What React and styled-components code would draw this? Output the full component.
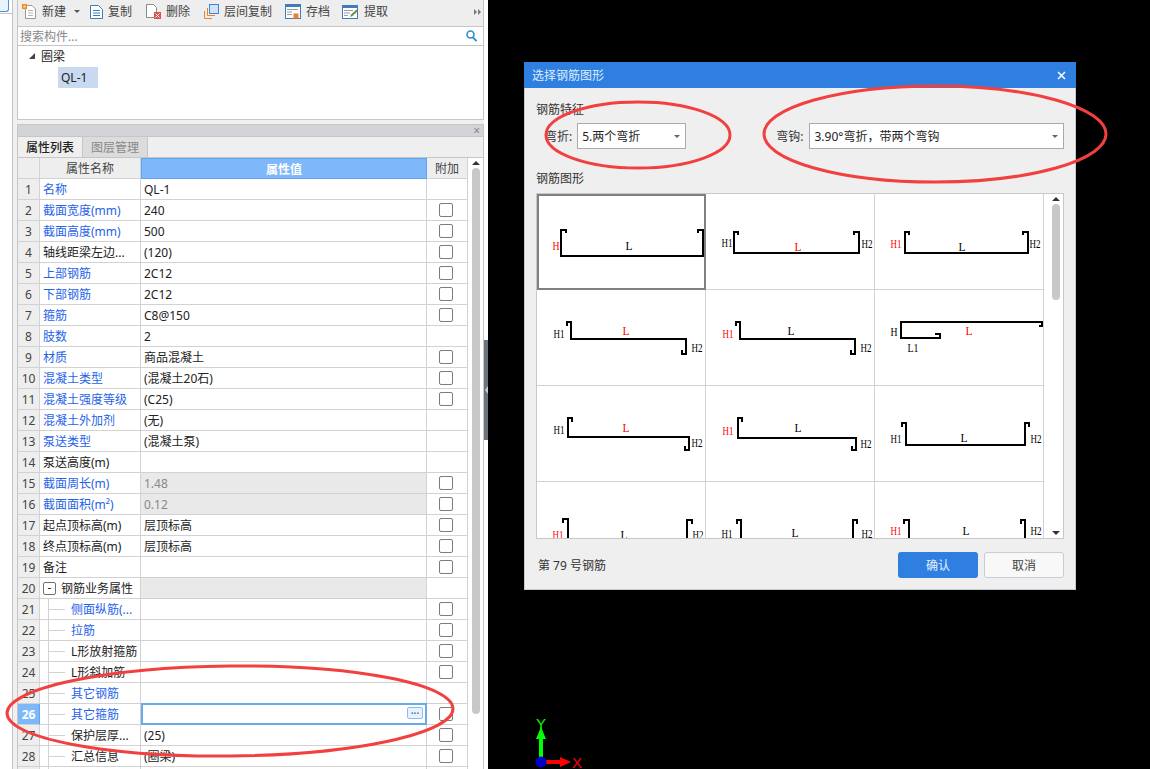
import styled, { createGlobalStyle } from "styled-components";

const GlobalStyle = createGlobalStyle`
  html, body {
    margin: 0;
    padding: 0;
    background: #000;
    overflow: hidden;
  }
  * {
    box-sizing: border-box;
  }
`;

const rows = [
  { name: "名称", value: "QL-1", link: true },
  { name: "截面宽度(mm)", value: "240", link: true, check: true },
  { name: "截面高度(mm)", value: "500", link: true, check: true },
  { name: "轴线距梁左边...", value: "(120)", check: true },
  { name: "上部钢筋", value: "2C12", link: true, check: true },
  { name: "下部钢筋", value: "2C12", link: true, check: true },
  { name: "箍筋", value: "C8@150", link: true, check: true },
  { name: "肢数", value: "2", link: true },
  { name: "材质", value: "商品混凝土", link: true, check: true },
  { name: "混凝土类型", value: "(混凝土20石)", link: true, check: true },
  { name: "混凝土强度等级", value: "(C25)", link: true, check: true },
  { name: "混凝土外加剂", value: "(无)", link: true },
  { name: "泵送类型", value: "(混凝土泵)", link: true },
  { name: "泵送高度(m)", value: "" },
  { name: "截面周长(m)", value: "1.48", link: true, check: true, locked: true },
  { name: "截面面积(m²)", value: "0.12", link: true, check: true, locked: true },
  { name: "起点顶标高(m)", value: "层顶标高", check: true },
  { name: "终点顶标高(m)", value: "层顶标高", check: true },
  { name: "备注", value: "", check: true },
  { name: "钢筋业务属性", value: "", group: true },
  { name: "侧面纵筋(...", value: "", link: true, check: true, child: true },
  { name: "拉筋", value: "", link: true, check: true, child: true },
  { name: "L形放射箍筋", value: "", check: true, child: true },
  { name: "L形斜加筋", value: "", check: true, child: true },
  { name: "其它钢筋", value: "", link: true, child: true },
  { name: "其它箍筋", value: "", link: true, check: true, child: true, active: true },
  { name: "保护层厚...", value: "(25)", check: true, child: true },
  { name: "汇总信息", value: "(圈梁)", check: true, child: true },
  { name: "", value: "", child: true, blank: true },
];

// 每个格子里的钢筋形状，坐标相对格子左上角
const shapes = [
  { d: "M29 39V36H24V62H166V36H161V39", labels: [["H", 19, 52, true], ["L", 92, 52]] },
  { d: "M32 41V38H28V59H153V38H148V41", labels: [["H1", 21, 49], ["L", 92, 53, true], ["H2", 161, 50]] },
  { d: "M34 41V38H30V59H153V38H148V41", labels: [["H1", 21, 50, true], ["L", 87, 53], ["H2", 160, 50]] },
  { d: "M30 36V32H34V49H149V64H145V60", labels: [["H1", 22, 44], ["L", 89, 41, true], ["H2", 160, 58]] },
  { d: "M30 36V32H34V49H149V64H145V60", labels: [["H1", 22, 44, true], ["L", 85, 41], ["H2", 160, 58]] },
  { d: "M60 44H65V48H26V32H167V36H164", labels: [["H", 19, 42], ["L", 94, 41, true], ["L1", 38, 58]] },
  { d: "M35 36V32H31V51H152V64H148V60", labels: [["H1", 22, 44], ["L", 89, 42, true], ["H2", 160, 57]] },
  { d: "M36 36V32H32V52H150V64H146V60", labels: [["H1", 22, 45, true], ["L", 92, 42], ["H2", 160, 58]] },
  { d: "M27 41V37H31V59H150V37H154V41", labels: [["H1", 21, 53], ["L", 89, 52], ["H2", 161, 53]] },
  { d: "M26 41V37H31V80H150V38H155V42", labels: [["H1", 21, 53, true], ["L", 87, 53], ["H2", 161, 53]] },
  { d: "M31 42V38H35V80H147V38H151V42", labels: [["H1", 21, 52], ["L", 89, 51], ["H2", 161, 52]] },
  { d: "M29 42V38H34V80H150V38H146V42", labels: [["H1", 21, 49, true], ["L", 91, 49], ["H2", 161, 49]] },
];

function NewIcon() {
  return (
    <svg width="15" height="15" viewBox="0 0 15 15">
      <path d="M3.5 1.5H10L13.5 5V14.5H3.5Z" fill="#fff" stroke="#9a9a9a" />
      <path d="M6 6.5H11M6 9H11M6 11.5H11" stroke="#b5b5b5" />
      <rect x="0" y="0" width="5" height="5" fill="#f08a24" />
      <rect x="1.5" y="1.5" width="2" height="2" fill="#ffe2a8" />
    </svg>
  );
}

function CopyIcon() {
  return (
    <svg width="13" height="14" viewBox="0 0 13 14">
      <path d="M.5 .5H8.5L12.5 4.5V13.5H.5Z" fill="#fff" stroke="#3f7cb8" />
      <path d="M3 5.5H10M3 8H10M3 10.5H10" stroke="#3f7cb8" />
    </svg>
  );
}

function DeleteIcon() {
  return (
    <svg width="15" height="15" viewBox="0 0 15 15">
      <path d="M.5 .5H7.5L10.5 3.5V13.5H.5Z" fill="#fff" stroke="#8a8a8a" />
      <rect x="8" y="8" width="7" height="7" fill="#d9534f" />
      <path d="M9.5 9.5L13.5 13.5M13.5 9.5L9.5 13.5" stroke="#fff" />
    </svg>
  );
}

function FloorCopyIcon() {
  return (
    <svg width="15" height="15" viewBox="0 0 15 15">
      <path d="M3.5 4V11.5H11M.5 7V14.5H8" fill="none" stroke="#ee7f2d" />
      <rect x="5.5" y=".5" width="9" height="9" fill="#cfe2f7" stroke="#3f86cc" />
    </svg>
  );
}

function SaveIcon() {
  return (
    <svg width="16" height="15" viewBox="0 0 16 15">
      <rect x=".5" y=".5" width="15" height="14" fill="#fff" stroke="#3f7cb8" />
      <rect x="0" y="0" width="16" height="3" fill="#3f7cb8" />
      <path d="M2 5.5H13M2 8H7M2 10.5H7" stroke="#9a9a9a" />
      <rect x="8.5" y="9.5" width="5" height="5" fill="#ee7f2d" />
    </svg>
  );
}

function ExtractIcon() {
  return (
    <svg width="17" height="14" viewBox="0 0 17 14">
      <rect x=".5" y=".5" width="15" height="13" fill="#fff" stroke="#3f7cb8" />
      <rect x="0" y="0" width="16" height="3" fill="#3f7cb8" />
      <path d="M2 5.5H11M2 8H8M2 10.5H6" stroke="#9a9a9a" />
      <path d="M8 12L9 9.5L14.5 4.5L16 6L10.5 11Z" fill="#6f8f4f" />
    </svg>
  );
}

function SearchIcon() {
  return (
    <svg width="11" height="12" viewBox="0 0 11 12">
      <circle cx="4.5" cy="4.5" r="3.5" fill="none" stroke="#2f8fc9" strokeWidth="1.6" />
      <path d="M7 7.5L10.5 11" stroke="#2f8fc9" strokeWidth="1.8" />
    </svg>
  );
}

function Rebar({ shape }) {
  return (
    <RebarDrawing viewBox="0 0 169 96">
      <path d={shape.d} fill="none" stroke="#000" strokeWidth="2" />
      {shape.labels.map(([text, x, y, red]) => (
        <RebarLabel
          key={text}
          x={x}
          y={y + 4}
          textAnchor="middle"
          textLength={text.length > 1 ? 11 : 7}
          lengthAdjust="spacingAndGlyphs"
          fill={red ? "#f00" : "#000"}
        >
          {text}
        </RebarLabel>
      ))}
    </RebarDrawing>
  );
}

function PropertyRow({ row, index }) {
  return (
    <Row>
      <NumberCell $active={row.active}>{!row.blank && index + 1}</NumberCell>
      <NameCell $link={row.link} $child={row.child} $group={row.group}>
        {row.group && <Toggle>-</Toggle>}
        {row.child && <TreeLine />}
        {row.name}
      </NameCell>
      <ValueCell $locked={row.locked} $group={row.group} $active={row.active}>
        {row.value}
        {row.active && <MoreButton>···</MoreButton>}
      </ValueCell>
      <ExtraCell>{row.check && <Checkbox />}</ExtraCell>
    </Row>
  );
}

export default function App() {
  return (
    <Page>
      <GlobalStyle />
      <Sidebar>
        <Rail>
          <RailButton />
        </Rail>
        <Main>
          <Toolbar>
            <ToolButton><NewIcon />新建<Caret /></ToolButton>
            <ToolButton $gap={10}><CopyIcon />复制</ToolButton>
            <ToolButton $gap={14}><DeleteIcon />删除</ToolButton>
            <ToolButton $gap={14}><FloorCopyIcon />层间复制</ToolButton>
            <ToolButton $gap={13}><SaveIcon />存档</ToolButton>
            <ToolButton $gap={12}><ExtractIcon />提取</ToolButton>
            <MoreArrows />
          </Toolbar>
          <SearchBar>
            搜索构件...
            <SearchIcon />
          </SearchBar>
          <Tree>
            <TreeRoot><TreeArrow />圈梁</TreeRoot>
            <TreeLeaf>QL-1</TreeLeaf>
          </Tree>
          <PanelBar>×</PanelBar>
          <Tabs>
            <Tab $active>属性列表</Tab>
            <Tab>图层管理</Tab>
          </Tabs>
          <TableWrap>
            <Table>
              <HeadRow>
                <HeadCell />
                <HeadCell>属性名称</HeadCell>
                <HeadCell $active>属性值</HeadCell>
                <HeadCell>附加</HeadCell>
              </HeadRow>
              {rows.map((row, i) => (
                <PropertyRow key={i} row={row} index={i} />
              ))}
            </Table>
            <Scrollbar>
              <ArrowUp />
              <Thumb $height={546} />
            </Scrollbar>
          </TableWrap>
        </Main>
        <Splitter>
          <SplitterHandle />
        </Splitter>
      </Sidebar>

      <Canvas>
        <Dialog>
          <TitleBar>
            选择钢筋图形
            <CloseIcon viewBox="0 0 9 9">
              <path d="M1 1L8 8M8 1L1 8" stroke="#fff" strokeWidth="1.5" />
            </CloseIcon>
          </TitleBar>
          <DialogBody>
            <SectionLabel>钢筋特征</SectionLabel>
            <ComboRow>
              <ComboLabel>弯折:</ComboLabel>
              <Combo $width={109}>5.两个弯折<ComboCaret /></Combo>
              <ComboLabel $offset={90} $after={6}>弯钩:</ComboLabel>
              <Combo>3.90°弯折，带两个弯钩<ComboCaret /></Combo>
            </ComboRow>
            <SectionLabel $top={20}>钢筋图形</SectionLabel>
            <GridFrame>
              <ShapeGrid>
                {shapes.map((shape, i) => (
                  <ShapeCell key={i} $selected={i === 0}>
                    <Rebar shape={shape} />
                  </ShapeCell>
                ))}
              </ShapeGrid>
              <GridScroll>
                <ArrowUp />
                <Thumb $height={96} />
                <ArrowDown />
              </GridScroll>
            </GridFrame>
            <Footer>
              <FooterText>第 79 号钢筋</FooterText>
              <FooterButtons>
                <PrimaryButton>确认</PrimaryButton>
                <CancelButton>取消</CancelButton>
              </FooterButtons>
            </Footer>
          </DialogBody>
        </Dialog>

        <Axis viewBox="0 0 70 59">
          <path d="M21 50V24" stroke="#00ff00" strokeWidth="4" />
          <path d="M21 17L26 29H16Z" fill="#00ff00" />
          <path d="M26 52H42" stroke="#ff0000" strokeWidth="4" />
          <path d="M51 52L40 47V57Z" fill="#ff0000" />
          <circle cx="21" cy="52" r="5.5" fill="#0000c8" />
          <AxisLabel x="21" y="19" fill="#00ff00">Y</AxisLabel>
          <AxisLabel x="57" y="58" fill="#ff0000">X</AxisLabel>
        </Axis>
      </Canvas>

      <Marks viewBox="0 0 1150 769">
        <ellipse cx="230" cy="711" rx="223" ry="45" transform="rotate(-.6 230 711)" />
        <ellipse cx="638" cy="135" rx="92" ry="33" />
        <ellipse cx="935" cy="134" rx="171" ry="48" />
      </Marks>
    </Page>
  );
}

const uiFont = `"Noto Sans", "Noto Sans CJK SC", sans-serif`;

const Page = styled.div`
  position: relative;
  display: flex;
  width: 1150px;
  height: 769px;
  overflow: hidden;
  background: #000;
  font-family: ${uiFont};
  font-size: 12px;
  color: #222;
`;

const Sidebar = styled.div`
  display: flex;
  width: 488px;
  height: 100%;
  flex-shrink: 0;
  background: #f0f0f0;
`;

const Rail = styled.div`
  width: 13px;
  height: 100%;
  margin-right: 4px;
  background: #fff;
  border-right: 1px solid #c4c4c4;
`;

const RailButton = styled.div`
  width: 12px;
  height: 14px;
  border-bottom: 1px solid #c4c4c4;

  &::before {
    content: "";
    display: block;
    width: 8px;
    height: 11px;
    border: 1px solid #4a90d9;
    border-top: none;
    border-left: none;
    border-bottom-right-radius: 3px;
    background: #eaf3fd;
  }
`;

const Main = styled.div`
  display: flex;
  flex-direction: column;
  width: 467px;
  height: 100%;
  flex-shrink: 0;
`;

const Toolbar = styled.div`
  display: flex;
  align-items: center;
  height: 27px;
  padding: 0 2px 3px 4px;
  background: #eeeeee;
  border-bottom: 1px solid #c6c6c6;
  border-left: 1px solid #c6c6c6;
  border-right: 1px solid #c6c6c6;
  color: #444;
`;

const ToolButton = styled.div`
  display: flex;
  align-items: center;
  gap: 5px;
  margin-left: ${(p) => p.$gap || 0}px;
  line-height: 1;
  white-space: nowrap;
`;

const Caret = styled.span`
  width: 0;
  height: 0;
  margin-left: 3px;
  border-left: 3px solid transparent;
  border-right: 3px solid transparent;
  border-top: 3px solid #555;
`;

const MoreArrows = styled.span`
  display: flex;
  gap: 1px;
  margin-left: auto;

  &::before,
  &::after {
    content: "";
    border-top: 3px solid transparent;
    border-bottom: 3px solid transparent;
    border-left: 3px solid #777;
  }
`;

const SearchBar = styled.div`
  display: flex;
  align-items: center;
  justify-content: space-between;
  height: 19px;
  padding: 0 6px 0 2px;
  background: #fff;
  border-left: 1px solid #c6c6c6;
  border-right: 1px solid #c6c6c6;
  border-bottom: 1px solid #c6c6c6;
  color: #888;
`;

const Tree = styled.div`
  height: 74px;
  background: #fff;
  border-left: 1px solid #c6c6c6;
  border-right: 1px solid #c6c6c6;
  border-bottom: 1px solid #c6c6c6;
`;

const TreeRoot = styled.div`
  display: flex;
  align-items: center;
  height: 20px;
  margin-bottom: 1px;
  padding-left: 11px;
`;

const TreeArrow = styled.span`
  width: 0;
  height: 0;
  margin-right: 6px;
  border-left: 6px solid transparent;
  border-bottom: 6px solid #444;
`;

const TreeLeaf = styled.div`
  display: flex;
  align-items: center;
  width: 40px;
  height: 21px;
  margin-left: 40px;
  padding-left: 3px;
  background: #c9d9f0;
`;

const PanelBar = styled.div`
  display: flex;
  align-items: center;
  justify-content: flex-end;
  height: 12px;
  margin-top: 4px;
  padding-right: 3px;
  background: #d3d4d8;
  border: 1px solid #c6c6c6;
  border-bottom: none;
  font-size: 12px;
  line-height: 1;
  color: #888;
`;

const Tabs = styled.div`
  display: flex;
  height: 22px;
  background: #efefef;
  border-top: 1px solid #c6c6c6;
  border-left: 1px solid #c6c6c6;
  border-right: 1px solid #c6c6c6;
  border-bottom: 1px solid #c6c6c6;
`;

const Tab = styled.div`
  display: flex;
  align-items: center;
  justify-content: center;
  width: 65px;
  border-right: 1px solid #c6c6c6;
  background: ${(p) => (p.$active ? "#efefef" : "#dcdcdc")};
  color: ${(p) => (p.$active ? "#222" : "#888")};
  font-weight: ${(p) => (p.$active ? 500 : 400)};
`;

const TableWrap = styled.div`
  display: flex;
  flex: 1;
  min-height: 0;
  background: #fff;
  border-left: 1px solid #c6c6c6;
  border-right: 1px solid #c6c6c6;
`;

const Table = styled.div`
  width: 450px;
  flex-shrink: 0;
`;

const Row = styled.div`
  display: grid;
  grid-template-columns: 22px 101px 286px 41px;
  height: 21px;
`;

const HeadRow = styled(Row)`
  height: 21px;
`;

const HeadCell = styled.div`
  display: flex;
  align-items: center;
  justify-content: center;
  background: ${(p) => (p.$active ? "#7eb8f8" : "#eeeeee")};
  color: ${(p) => (p.$active ? "#fff" : "#444")};
  font-weight: ${(p) => (p.$active ? 700 : 400)};
  border-right: 1px solid ${(p) => (p.$active ? "#5fa4ee" : "#d2d2d2")};
  border-bottom: 1px solid ${(p) => (p.$active ? "#5fa4ee" : "#d2d2d2")};
  border-top: ${(p) => (p.$active ? "1px solid #5fa4ee" : "none")};
  border-left: ${(p) => (p.$active ? "1px solid #5fa4ee" : "none")};
`;

const NumberCell = styled.div`
  display: flex;
  align-items: center;
  justify-content: center;
  background: ${(p) => (p.$active ? "#7eb8f8" : "#eeeeee")};
  color: ${(p) => (p.$active ? "#fff" : "#444")};
  font-weight: ${(p) => (p.$active ? 700 : 400)};
  border-right: 1px solid ${(p) => (p.$active ? "#5fa4ee" : "#d2d2d2")};
  border-bottom: 1px solid #d2d2d2;
`;

const NameCell = styled.div`
  position: relative;
  display: flex;
  align-items: center;
  padding-left: ${(p) => (p.$child ? 31 : 3)}px;
  color: ${(p) => (p.$link ? "#1f63e8" : "#222")};
  background: #fff;
  border-right: 1px solid #d2d2d2;
  border-bottom: 1px solid #d2d2d2;
  white-space: nowrap;
`;

const Toggle = styled.span`
  display: flex;
  align-items: center;
  justify-content: center;
  width: 13px;
  height: 13px;
  margin-right: 5px;
  border: 1px solid #707070;
  border-radius: 2px;
  line-height: 1;
`;

const TreeLine = styled.span`
  position: absolute;
  left: 8px;
  top: 0;
  bottom: -1px;
  width: 17px;
  border-left: 1px solid #d2d2d2;

  &::after {
    content: "";
    position: absolute;
    left: 0;
    right: 0;
    top: 10px;
    border-top: 1px solid #d2d2d2;
  }
`;

const ValueCell = styled.div`
  position: relative;
  display: flex;
  align-items: center;
  padding-left: 3px;
  background: ${(p) => (p.$locked || p.$group ? "#e9e9e9" : "#fff")};
  color: ${(p) => (p.$locked ? "#888" : "#222")};
  border-right: 1px solid #d2d2d2;
  border-bottom: 1px solid #d2d2d2;
  ${(p) => p.$active && "border: 2px solid #6aaae8; margin-top: -1px; height: 22px;"}
`;

const MoreButton = styled.span`
  position: absolute;
  right: 2px;
  top: 2px;
  display: flex;
  align-items: center;
  justify-content: center;
  width: 16px;
  height: 12px;
  border: 1px solid #8fbce8;
  border-radius: 2px;
  background: #eaf3fd;
  color: #3f7cb8;
  font-size: 10px;
  font-weight: 700;
  line-height: 1;
`;

const ExtraCell = styled.div`
  display: flex;
  align-items: center;
  justify-content: center;
  border-right: 1px solid #d2d2d2;
  border-bottom: 1px solid #d2d2d2;
`;

const Checkbox = styled.span`
  display: block;
  width: 14px;
  height: 14px;
  margin: -1px 2px 0 0;
  border: 1px solid #7c7c7c;
  border-radius: 2px;
  background: #fff;
`;

const Scrollbar = styled.div`
  display: flex;
  flex-direction: column;
  align-items: center;
  flex: 1;
  padding-top: 3px;
`;

const ArrowUp = styled.span`
  flex-shrink: 0;
  width: 0;
  height: 0;
  margin-bottom: 3px;
  border-left: 4px solid transparent;
  border-right: 4px solid transparent;
  border-bottom: 4px solid #333;
`;

const ArrowDown = styled.span`
  flex-shrink: 0;
  width: 0;
  height: 0;
  margin-top: auto;
  margin-bottom: 3px;
  border-left: 4px solid transparent;
  border-right: 4px solid transparent;
  border-top: 4px solid #333;
`;

const Thumb = styled.div`
  flex-shrink: 0;
  width: 8px;
  height: ${(p) => p.$height}px;
  border-radius: 4px;
  background: #c8c8c8;
`;

const Splitter = styled.div`
  width: 4px;
  height: 100%;
  padding-top: 340px;
  background: #fff;
`;

const SplitterHandle = styled.div`
  position: relative;
  width: 4px;
  height: 100px;
  background: #6c757d;

  &::after {
    content: "";
    position: absolute;
    right: 0;
    top: 46px;
    border-top: 4px solid transparent;
    border-bottom: 4px solid transparent;
    border-right: 3px solid #c8ccd0;
  }
`;

const Canvas = styled.div`
  position: relative;
  flex: 1;
  height: 100%;
  padding: 62px 0 0 36px;
`;

const Dialog = styled.div`
  width: 552px;
  height: 528px;
  background: #efefef;
  border: 1px solid #c5cbd3;
  border-top: none;
`;

const TitleBar = styled.div`
  display: flex;
  align-items: center;
  justify-content: space-between;
  height: 26px;
  margin: 0 -1px;
  padding: 0 10px 0 8px;
  background: #2e7fe0;
  color: #dfeeff;
`;

const CloseIcon = styled.svg`
  width: 9px;
  height: 9px;
`;

const DialogBody = styled.div`
  padding: 0 11px;
`;

const SectionLabel = styled.div`
  height: 18px;
  margin-top: ${(p) => p.$top || 12}px;
  padding-top: 1px;
  line-height: 18px;
  color: #333;
`;

const ComboRow = styled.div`
  display: flex;
  align-items: center;
  margin-top: 5px;
  padding-left: 9px;
`;

const ComboLabel = styled.span`
  margin-left: ${(p) => p.$offset || 0}px;
  margin-right: ${(p) => p.$after || 5}px;
  color: #333;
`;

const Combo = styled.div`
  display: flex;
  align-items: center;
  justify-content: space-between;
  width: ${(p) => (p.$width ? `${p.$width}px` : "auto")};
  flex: ${(p) => (p.$width ? "none" : 1)};
  height: 26px;
  padding: 0 5px 0 4px;
  background: #fff;
  border: 1px solid #aaaaaa;
  color: #222;
`;

const ComboCaret = styled.span`
  width: 0;
  height: 0;
  border-left: 3px solid transparent;
  border-right: 3px solid transparent;
  border-top: 3px solid #666;
`;

const GridFrame = styled.div`
  display: flex;
  height: 346px;
  margin-top: 6px;
  background: #fff;
  border: 1px solid #c8c8c8;
  overflow: hidden;
`;

const ShapeGrid = styled.div`
  display: grid;
  grid-template-columns: repeat(3, 169px);
  grid-auto-rows: 96px;
  width: 507px;
  flex-shrink: 0;
`;

const ShapeCell = styled.div`
  position: relative;
  border-right: 1px solid #d2d2d2;
  border-bottom: 1px solid #d2d2d2;
  ${(p) => p.$selected && "outline: 2px solid #808080; outline-offset: -2px;"}
`;

const RebarDrawing = styled.svg`
  display: block;
  width: 169px;
  height: 96px;
  margin: 0;
`;

const RebarLabel = styled.text`
  font-family: "Liberation Serif", serif;
  font-size: 12px;
`;

const GridScroll = styled.div`
  display: flex;
  flex-direction: column;
  align-items: center;
  flex: 1;
  padding: 3px 0 0 5px;
`;

const Footer = styled.div`
  display: flex;
  align-items: center;
  justify-content: space-between;
  margin-top: 13px;
`;

const FooterText = styled.span`
  padding-left: 2px;
  color: #333;
`;

const FooterButtons = styled.div`
  display: flex;
  gap: 6px;
`;

const PrimaryButton = styled.div`
  display: flex;
  align-items: center;
  justify-content: center;
  width: 80px;
  height: 26px;
  border-radius: 3px;
  background: #2e7fe0;
  color: #e6f1ff;
`;

const CancelButton = styled(PrimaryButton)`
  background: #f8f8f8;
  border: 1px solid #c5cdd8;
  color: #444;
`;

const Axis = styled.svg`
  position: absolute;
  left: 32px;
  top: 710px;
  width: 70px;
  height: 59px;
`;

const AxisLabel = styled.text`
  font-family: "Liberation Sans", sans-serif;
  font-size: 15px;
  font-weight: 400;
  text-anchor: middle;
`;

const Marks = styled.svg`
  position: absolute;
  left: 0;
  top: 0;
  width: 1150px;
  height: 769px;
  pointer-events: none;

  ellipse {
    fill: none;
    stroke: #f24040;
    stroke-width: 3;
  }
`;
